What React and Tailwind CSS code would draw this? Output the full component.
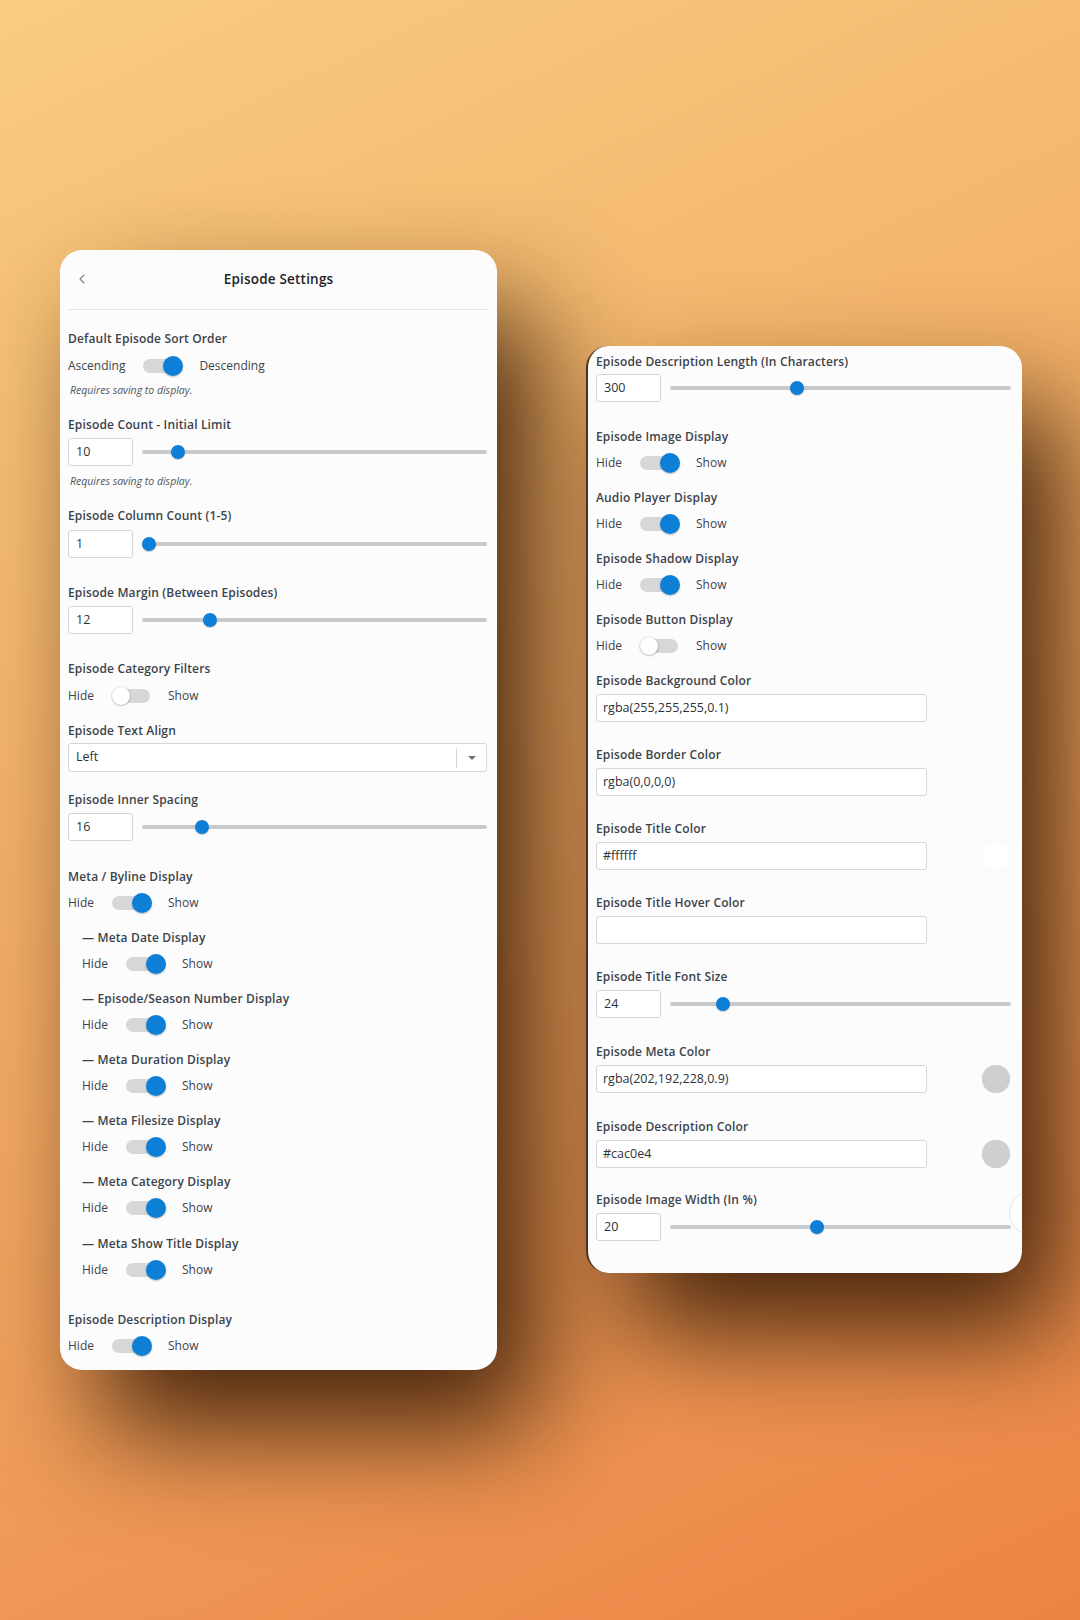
import React from "react";
import { ChevronLeft } from "lucide-react";

function Label({ children, className = "" }) {
  return (
    <div className={`text-[12px] leading-[16px] font-semibold text-[#3c434a] tracking-[0.15px] whitespace-nowrap ${className}`}>
      {children}
    </div>
  );
}

function Toggle({ on }) {
  return (
    <div className="relative w-[40px] h-[20px] shrink-0">
      <div className="absolute left-0 right-[2px] top-[3px] h-[14px] rounded-full bg-[#d6d7d9]" />
      {on ? (
        <div className="absolute right-0 top-0 w-[20px] h-[20px] rounded-full bg-[#0e7fd7] shadow-[0_1px_2px_rgba(0,0,0,0.25)]" />
      ) : (
        <div className="absolute left-0 top-[1px] w-[18px] h-[18px] rounded-full bg-white shadow-[0_0_0_1px_rgba(0,0,0,0.07),0_1px_2px_rgba(0,0,0,0.2)]" />
      )}
    </div>
  );
}

function ToggleRow({ left = "Hide", right = "Show", on = true, className = "" }) {
  return (
    <div className={`flex items-center h-[20px] text-[12px] text-[#3c434a] ${className}`}>
      <span>{left}</span>
      <div className="ml-[18px]">
        <Toggle on={on} />
      </div>
      <span className="ml-[16px]">{right}</span>
    </div>
  );
}

function Note({ className = "" }) {
  return (
    <div className={`text-[10.5px] leading-[14px] italic text-[#50575e] pl-[2px] ${className}`}>
      Requires saving to display.
    </div>
  );
}

function Slider({ left }) {
  return (
    <div className="relative flex-1 h-[14px] flex items-center">
      <div className="w-full h-[4px] rounded-full bg-[#c8c9cc]" />
      <div
        className="absolute top-0 w-[14px] h-[14px] rounded-full bg-[#0e7fd7] shadow-[0_1px_1px_rgba(0,0,0,0.2)]"
        style={{ left: `${left}px` }}
      />
    </div>
  );
}

function InputSlider({ value, thumb, className = "" }) {
  return (
    <div className={`flex items-center h-[28px] ${className}`}>
      <div className="w-[65px] h-[28px] shrink-0 flex items-center px-[7px] bg-white border border-[#d3d5d8] rounded-[3px] text-[12.5px] text-[#2c3338]">
        {value}
      </div>
      <div className="ml-[9px] flex-1 flex">
        <Slider left={thumb} />
      </div>
    </div>
  );
}

function ColorInput({ value, swatch, className = "" }) {
  return (
    <div className={`flex items-center justify-between h-[28px] ${className}`}>
      <div className="w-[331px] h-[28px] flex items-center px-[6px] bg-white border border-[#d3d5d8] rounded-[3px] text-[12.5px] text-[#2c3338]">
        {value}
      </div>
      {swatch === "white" && (
        <div className="w-[28px] h-[28px] mr-[1px] rounded-full bg-white shadow-[0_0_2px_rgba(0,0,0,0.05)]" />
      )}
      {swatch === "grey" && (
        <div className="w-[28px] h-[28px] mr-[1px] rounded-full bg-[#cfcfcf] shadow-[0_0_1px_rgba(0,0,0,0.15)]" />
      )}
    </div>
  );
}

const subItems = [
  "Meta Date Display",
  "Episode/Season Number Display",
  "Meta Duration Display",
  "Meta Filesize Display",
  "Meta Category Display",
  "Meta Show Title Display",
];

const panelShadow = "shadow-[40px_60px_110px_rgba(58,28,6,0.92)]";

function LeftPanel() {
  return (
    <div className={`w-[437px] shrink-0 mt-[250px] ml-[60px] bg-[#fcfcfc] rounded-[22px] ${panelShadow}`}>
      <div className="relative h-[59px] flex items-center justify-center">
        <ChevronLeft className="absolute left-[14px] top-[21px] text-[#7b7f84]" size={16} strokeWidth={1.6} />
        <div className="text-[13.5px] font-semibold text-[#1d2327] tracking-[0.2px]">Episode Settings</div>
      </div>
      <div className="mx-[8px] h-px bg-[#e3e4e6]" />
      <div className="pl-[8px] pr-[10px] pb-[14px]">
        <Label className="mt-[21px]">Default Episode Sort Order</Label>
        <ToggleRow className="mt-[9px]" left="Ascending" right="Descending" on />
        <Note className="mt-[7px]" />

        <Label className="mt-[20px]">Episode Count - Initial Limit</Label>
        <InputSlider className="mt-[5px]" value="10" thumb={29} />
        <Note className="mt-[8px]" />

        <Label className="mt-[20px]">Episode Column Count (1-5)</Label>
        <InputSlider className="mt-[6px]" value="1" thumb={0} />

        <Label className="mt-[27px]">Episode Margin (Between Episodes)</Label>
        <InputSlider className="mt-[5px]" value="12" thumb={61} />

        <Label className="mt-[27px]">Episode Category Filters</Label>
        <ToggleRow className="mt-[9px]" on={false} />

        <Label className="mt-[17px]">Episode Text Align</Label>
        <div className="mt-[4px] h-[29px] flex items-center bg-white border border-[#d3d5d8] rounded-[3px] text-[12.5px] text-[#2c3338]">
          <span className="pl-[7px] flex-1">Left</span>
          <div className="w-px h-[20px] bg-[#d6d7d9]" />
          <div className="w-[29px] flex items-center justify-center">
            <div className="w-0 h-0 border-l-[4px] border-r-[4px] border-t-[4px] border-l-transparent border-r-transparent border-t-[#6c7075]" />
          </div>
        </div>

        <Label className="mt-[20px]">Episode Inner Spacing</Label>
        <InputSlider className="mt-[5px]" value="16" thumb={53} />

        <Label className="mt-[28px]">Meta / Byline Display</Label>
        <ToggleRow className="mt-[8px]" on />

        <div className="pl-[14px]">
          {subItems.map((s, i) => (
            <div key={s}>
              <Label className={i === 5 ? "mt-[18px]" : "mt-[17px]"}>— {s}</Label>
              <ToggleRow className="mt-[8px]" on />
            </div>
          ))}
        </div>

        <Label className="mt-[32px]">Episode Description Display</Label>
        <ToggleRow className="mt-[8px]" on />
      </div>
    </div>
  );
}

function RightPanel() {
  return (
    <div className={`relative overflow-hidden w-[436px] shrink-0 mt-[346px] ml-[89px] bg-[#fcfcfc] rounded-[22px] border-l-2 border-l-[#4a321e] ${panelShadow}`}>
      <div className="pl-[8px] pr-[11px] pt-[8px] pb-[32px]">
        <Label>Episode Description Length (In Characters)</Label>
        <InputSlider className="mt-[4px]" value="300" thumb={120} />

        <Label className="mt-[27px]">Episode Image Display</Label>
        <ToggleRow className="mt-[8px]" on />
        <Label className="mt-[17px]">Audio Player Display</Label>
        <ToggleRow className="mt-[8px]" on />
        <Label className="mt-[17px]">Episode Shadow Display</Label>
        <ToggleRow className="mt-[8px]" on />
        <Label className="mt-[17px]">Episode Button Display</Label>
        <ToggleRow className="mt-[8px]" on={false} />

        <Label className="mt-[17px]">Episode Background Color</Label>
        <ColorInput className="mt-[5px]" value="rgba(255,255,255,0.1)" />
        <Label className="mt-[25px]">Episode Border Color</Label>
        <ColorInput className="mt-[5px]" value="rgba(0,0,0,0)" />
        <Label className="mt-[25px]">Episode Title Color</Label>
        <ColorInput className="mt-[5px]" value="#ffffff" swatch="white" />
        <Label className="mt-[25px]">Episode Title Hover Color</Label>
        <ColorInput className="mt-[5px]" value="" />

        <Label className="mt-[25px]">Episode Title Font Size</Label>
        <InputSlider className="mt-[5px]" value="24" thumb={46} />

        <Label className="mt-[26px]">Episode Meta Color</Label>
        <ColorInput className="mt-[5px]" value="rgba(202,192,228,0.9)" swatch="grey" />
        <Label className="mt-[26px]">Episode Description Color</Label>
        <ColorInput className="mt-[5px]" value="#cac0e4" swatch="grey" />

        <Label className="mt-[24px]">Episode Image Width (In %)</Label>
        <InputSlider className="mt-[5px]" value="20" thumb={140} />
      </div>
      <div className="absolute left-[421px] top-[845px] w-[44px] h-[44px] rounded-full bg-white border border-[#e2e3e5]" />
    </div>
  );
}

export default function App() {
  return (
    <div className="w-[1080px] h-[1620px] overflow-hidden font-['Open_Sans',sans-serif] bg-[linear-gradient(155deg,#f8cc80_0%,#f4b56c_35%,#f0a05c_65%,#ec8344_100%)]">
      <div className="flex items-start">
        <LeftPanel />
        <RightPanel />
      </div>
    </div>
  );
}
